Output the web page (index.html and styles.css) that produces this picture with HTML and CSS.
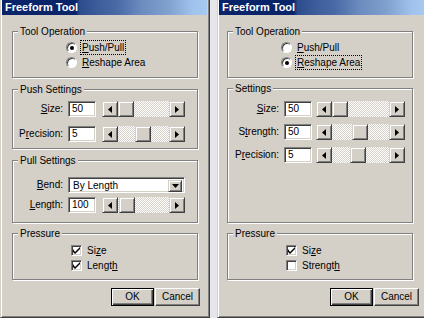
FILE: index.html
```html
<!DOCTYPE html>
<html>
<head>
<meta charset="utf-8">
<link rel="stylesheet" href="styles.css">
</head>
<body>
<div class="screen">
  <div class="dialog left">
    <div class="titlebar">Freeform Tool</div>
    <div class="body">
      <div class="group g-op">
        <div class="legend">Tool Operation</div>
        <div class="radios">
          <div class="radio"><span class="rb on"><span class="dot"></span></span><span class="rl focus"><u>P</u>ush/Pull</span></div>
          <div class="radio"><span class="rb"></span><span class="rl"><u>R</u>eshape Area</span></div>
        </div>
      </div>
      <div class="group g-push">
        <div class="legend">Push Settings</div>
        <div class="rows">
          <div class="lbl"><u>S</u>ize:</div>
          <div class="field">50</div>
          <div class="sb"><span class="sbb"><svg width="4" height="7" viewBox="0 0 4 7"><polygon points="4,0 4,7 0,3.5" fill="#000"/></svg></span><span class="track"><span class="thumb" style="margin-left:0px"></span></span><span class="sbb"><svg width="4" height="7" viewBox="0 0 4 7"><polygon points="0,0 0,7 4,3.5" fill="#000"/></svg></span></div>
          <div class="lbl">P<u>r</u>ecision:</div>
          <div class="field">5</div>
          <div class="sb"><span class="sbb"><svg width="4" height="7" viewBox="0 0 4 7"><polygon points="4,0 4,7 0,3.5" fill="#000"/></svg></span><span class="track"><span class="thumb" style="margin-left:17px"></span></span><span class="sbb"><svg width="4" height="7" viewBox="0 0 4 7"><polygon points="0,0 0,7 4,3.5" fill="#000"/></svg></span></div>
        </div>
      </div>
      <div class="group g-pull">
        <div class="legend">Pull Settings</div>
        <div class="rows">
          <div class="lbl"><u>B</u>end:</div>
          <div class="select"><span class="sel-text">By Length</span><span class="sel-btn"><svg width="7" height="4" viewBox="0 0 7 4"><polygon points="0,0 7,0 3.5,4" fill="#000"/></svg></span></div>
          <div class="lbl"><u>L</u>ength:</div>
          <div class="field">100</div>
          <div class="sb"><span class="sbb"><svg width="4" height="7" viewBox="0 0 4 7"><polygon points="4,0 4,7 0,3.5" fill="#000"/></svg></span><span class="track"><span class="thumb" style="margin-left:1px"></span></span><span class="sbb"><svg width="4" height="7" viewBox="0 0 4 7"><polygon points="0,0 0,7 4,3.5" fill="#000"/></svg></span></div>
        </div>
      </div>
      <div class="group g-press">
        <div class="legend">Pressure</div>
        <div class="checks">
          <div class="check"><span class="cb"><svg width="7" height="7" viewBox="0 0 7 7"><path d="M0 2v3l2 2 5-5V0L2 5z" fill="#000"/></svg></span><span>Si<u>z</u>e</span></div>
          <div class="check"><span class="cb"><svg width="7" height="7" viewBox="0 0 7 7"><path d="M0 2v3l2 2 5-5V0L2 5z" fill="#000"/></svg></span><span>Lengt<u>h</u></span></div>
        </div>
      </div>
      <div class="buttons">
        <div class="btn default">OK</div>
        <div class="btn cancel">Cancel</div>
      </div>
    </div>
  </div>

  <div class="dialog right">
    <div class="titlebar">Freeform Tool</div>
    <div class="body">
      <div class="group g-op">
        <div class="legend">Tool Operation</div>
        <div class="radios">
          <div class="radio"><span class="rb"></span><span class="rl"><u>P</u>ush/Pull</span></div>
          <div class="radio"><span class="rb on"><span class="dot"></span></span><span class="rl focus"><u>R</u>eshape Area</span></div>
        </div>
      </div>
      <div class="group g-set">
        <div class="legend">Settings</div>
        <div class="rows">
          <div class="lbl"><u>S</u>ize:</div>
          <div class="field">50</div>
          <div class="sb"><span class="sbb"><svg width="4" height="7" viewBox="0 0 4 7"><polygon points="4,0 4,7 0,3.5" fill="#000"/></svg></span><span class="track"><span class="thumb" style="margin-left:0px"></span></span><span class="sbb"><svg width="4" height="7" viewBox="0 0 4 7"><polygon points="0,0 0,7 4,3.5" fill="#000"/></svg></span></div>
          <div class="lbl">S<u>t</u>rength:</div>
          <div class="field">50</div>
          <div class="sb"><span class="sbb"><svg width="4" height="7" viewBox="0 0 4 7"><polygon points="4,0 4,7 0,3.5" fill="#000"/></svg></span><span class="track"><span class="thumb" style="margin-left:20px"></span></span><span class="sbb"><svg width="4" height="7" viewBox="0 0 4 7"><polygon points="0,0 0,7 4,3.5" fill="#000"/></svg></span></div>
          <div class="lbl">P<u>r</u>ecision:</div>
          <div class="field">5</div>
          <div class="sb"><span class="sbb"><svg width="4" height="7" viewBox="0 0 4 7"><polygon points="4,0 4,7 0,3.5" fill="#000"/></svg></span><span class="track"><span class="thumb" style="margin-left:18px"></span></span><span class="sbb"><svg width="4" height="7" viewBox="0 0 4 7"><polygon points="0,0 0,7 4,3.5" fill="#000"/></svg></span></div>
        </div>
      </div>
      <div class="group g-press">
        <div class="legend">Pressure</div>
        <div class="checks">
          <div class="check"><span class="cb"><svg width="7" height="7" viewBox="0 0 7 7"><path d="M0 2v3l2 2 5-5V0L2 5z" fill="#000"/></svg></span><span>Si<u>z</u>e</span></div>
          <div class="check"><span class="cb"></span><span>Strengt<u>h</u></span></div>
        </div>
      </div>
      <div class="buttons">
        <div class="btn default">OK</div>
        <div class="btn cancel">Cancel</div>
      </div>
    </div>
  </div>
</div>
</body>
</html>
```

FILE: styles.css
```css
* { box-sizing: border-box; }
html, body { margin: 0; padding: 0; }
body {
  width: 424px;
  height: 318px;
  overflow: hidden;
  background: #e6e6ea;
  font-family: "Liberation Sans", Arial, sans-serif;
  font-size: 10px;
  color: #000;
}
.screen { display: flex; gap: 7px; height: 318px; }
.dialog {
  flex: none;
  height: 318px;
  background: #d4d0c8;
  border-left: 1px solid #d4d0c8;
  border-right: 1px solid #404040;
  border-bottom: 1px solid #404040;
  box-shadow: inset 1px 0 #fff, inset -1px -1px #808080;
  display: flex;
  flex-direction: column;
}
.dialog.left { width: 210px; }
.dialog.right { width: 212px; }
.titlebar {
  height: 15px;
  margin: 0 2px 0 1px;
  padding-left: 3px;
  color: #fff;
  font-weight: bold;
  font-size: 11px;
  line-height: 15px;
  background: linear-gradient(to right,
    #0a246a 0, #0a246a 36%, #2c4c8c 38%, #3d5d9b 47%, #4a6aa6 56%,
    #5a7ab2 62%, #6c8cc0 68%, #80a0ce 81%, #a0c2ec 93%, #a6caf0 100%);
}
.body { padding: 16px 11px 0 11px; display: flex; flex-direction: column; }
.dialog.right .body { padding-left: 9px; }

.group {
  width: 186px;
  border: 1px solid #808080;
  box-shadow: 1px 1px 0 #fff, inset 1px 1px 0 #fff;
  flex: none;
}
.g-op { height: 47px; }
.g-push { height: 60px; margin-top: 11px; }
.g-pull { height: 63px; margin-top: 11px; }
.g-set { height: 135px; margin-top: 10px; }
.g-press { height: 47px; margin-top: 10px; }
.dialog.left .g-press { margin-top: 10px; }

.legend {
  width: max-content;
  height: 13px;
  line-height: 13px;
  margin: -7px 0 0 5px;
  padding: 0 2px;
  background: #d4d0c8;
}

.radios { padding: 2px 0 0 53px; display: flex; flex-direction: column; }
.radio { height: 15px; display: flex; align-items: center; gap: 4px; }
.rb {
  width: 11px; height: 11px;
  border-radius: 50%;
  background: #fff;
  border: 1px solid;
  border-color: #808080 #fff #fff #808080;
  box-shadow: inset 1px 1px 0 #404040;
  display: flex; align-items: center; justify-content: center;
  flex: none;
}
.dot { width: 4px; height: 4px; border-radius: 50%; background: #000; }
.rl { line-height: 13px; padding: 0 1px; outline: 1px solid transparent; }
.rl.focus { outline: 1px dotted #000; }

.rows {
  display: grid;
  grid-template-columns: 44px 28px 84px;
  column-gap: 5px;
  padding-left: 6px;
}
.g-push .rows { padding-top: 5px; row-gap: 9px; }
.g-pull .rows { padding-top: 10px; row-gap: 4px; }
.g-set .rows { padding-top: 6px; row-gap: 7px; padding-left: 7px; grid-template-columns: 44px 28px 88px; }
.lbl { text-align: right; line-height: 16px; height: 16px; }
.field {
  height: 16px;
  background: #fff;
  border: 1px solid;
  border-color: #808080 #fff #fff #808080;
  box-shadow: inset 1px 1px 0 #404040, inset -1px -1px 0 #d4d0c8;
  padding-left: 3px;
  line-height: 14px;
}
.sb { height: 16px; display: flex; margin-left: 1px; }
.g-set .sb { margin-left: -1px; }
.sbb, .thumb {
  width: 16px; height: 16px;
  flex: none;
  background: #d4d0c8;
  border: 1px solid;
  border-color: #d4d0c8 #404040 #404040 #d4d0c8;
  box-shadow: inset 1px 1px 0 #fff, inset -1px -1px 0 #808080;
  display: flex; align-items: center; justify-content: center;
}
.track {
  flex: 1;
  display: flex;
  background-color: #d4d0c8;
  background-image: repeating-conic-gradient(#fff 0 25%, #d4d0c8 0 50%);
  background-size: 2px 2px;
}
.select {
  grid-column: 2 / 4;
  height: 16px;
  background: #fff;
  border: 1px solid;
  border-color: #808080 #fff #fff #808080;
  box-shadow: inset 1px 1px 0 #404040, inset -1px -1px 0 #d4d0c8;
  display: flex;
  padding: 2px 2px 2px 2px;
}
.sel-text { flex: 1; line-height: 11px; padding-left: 2px; }
.sel-btn {
  width: 14px; height: 12px;
  background: #d4d0c8;
  border: 1px solid;
  border-color: #d4d0c8 #404040 #404040 #d4d0c8;
  box-shadow: inset 1px 1px 0 #fff, inset -1px -1px 0 #808080;
  display: flex; align-items: center; justify-content: center;
}

.checks { padding: 3px 0 0 58px; display: flex; flex-direction: column; }
.check { height: 15px; display: flex; align-items: center; gap: 5px; }
.cb {
  width: 11px; height: 11px;
  flex: none;
  background: #fff;
  border: 1px solid;
  border-color: #808080 #fff #fff #808080;
  box-shadow: inset 1px 1px 0 #404040, inset -1px -1px 0 #d4d0c8;
  display: flex; align-items: center; justify-content: center;
}

.buttons { display: flex; justify-content: flex-end; gap: 1px; margin: 8px -2px 0 0; }
.btn {
  height: 18px;
  line-height: 16px;
  text-align: center;
  background: #d4d0c8;
  border: 1px solid;
  border-color: #fff #404040 #404040 #fff;
  box-shadow: inset -1px -1px 0 #808080;
}
.btn.default { width: 43px; border-color: #000; box-shadow: inset 1px 1px 0 #fff, inset -1px -1px 0 #404040, inset -2px -2px 0 #808080; }
.btn.cancel { width: 45px; }
```
